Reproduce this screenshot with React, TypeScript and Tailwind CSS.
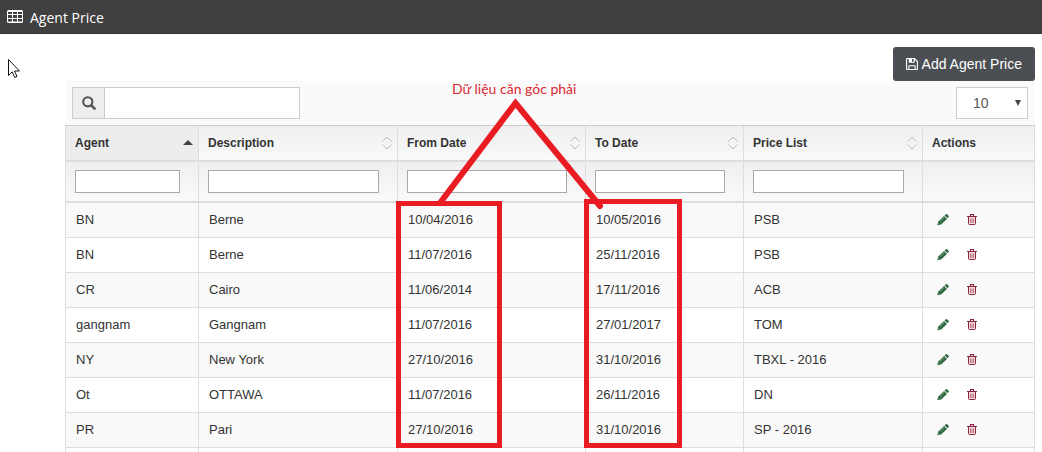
import React from "react";

type Agent = {
  agent: string;
  description: string;
  from: string;
  to: string;
  priceList: string;
};

const rows: Agent[] = [
  { agent: "BN", description: "Berne", from: "10/04/2016", to: "10/05/2016", priceList: "PSB" },
  { agent: "BN", description: "Berne", from: "11/07/2016", to: "25/11/2016", priceList: "PSB" },
  { agent: "CR", description: "Cairo", from: "11/06/2014", to: "17/11/2016", priceList: "ACB" },
  { agent: "gangnam", description: "Gangnam", from: "11/07/2016", to: "27/01/2017", priceList: "TOM" },
  { agent: "NY", description: "New York", from: "27/10/2016", to: "31/10/2016", priceList: "TBXL - 2016" },
  { agent: "Ot", description: "OTTAWA", from: "11/07/2016", to: "26/11/2016", priceList: "DN" },
  { agent: "PR", description: "Pari", from: "27/10/2016", to: "31/10/2016", priceList: "SP - 2016" },
];

const columns = ["Agent", "Description", "From Date", "To Date", "Price List"];

function TableIcon() {
  return (
    <svg width="16" height="13" viewBox="0 0 16 13" aria-hidden="true">
      <path
        fill="#fff"
        fillRule="evenodd"
        d="M1.5 0h13A1.5 1.5 0 0 1 16 1.500v10A1.500 1.500 0 0 1 14.500 13h-13A1.500 1.500 0 0 1 0 11.500v-10A1.500 1.500 0 0 1 1.500 0zM1 2v2h4V2zm5 0v2h4V2zm5 0v2h4V2zM1 5v3h4V5zm5 0v3h4V5zm5 0v3h4V5zM1 9v2.500h4V9zm5 0v2.500h4V9zm5 0v2.500h4V9z"
      />
    </svg>
  );
}

function SaveIcon() {
  return (
    <svg width="12" height="12" viewBox="0 0 13 13" aria-hidden="true">
      <path
        fill="#fff"
        fillRule="evenodd"
        d="M1 0h8.500L13 3.500V12a1 1 0 0 1-1 1H1a1 1 0 0 1-1-1V1a1 1 0 0 1 1-1zM1.200 1.200v10.600H2.500V8.500a.7.7 0 0 1 .7-.7h6.600a.7.7 0 0 1 .7.7v3.300h1.300V4L9.500 1.600V4.500a.7.7 0 0 1-.7.7H3.700a.7.7 0 0 1-.7-.7V1.200zM6.500 1.200V4h1.700V1.200zM3.700 9v2.800h5.600V9z"
      />
    </svg>
  );
}

function SearchIcon() {
  return (
    <svg width="14" height="14" viewBox="0 0 14 14" aria-hidden="true" fill="none" stroke="#555">
      <circle cx="5.800" cy="5.800" r="4.600" strokeWidth="2.100" />
      <path d="M9.300 9.300l3.300 3.300" strokeWidth="2.500" strokeLinecap="round" />
    </svg>
  );
}

function PencilIcon() {
  return (
    <svg width="12" height="12" viewBox="0 0 12 12" aria-hidden="true">
      <path fill="#2f6b42" d="M.3 11.300l.8-3.500L7 1.900 10 4.900l-5.900 5.600zM7.500 1.400L8.900.3a.9.9 0 0 1 1.200 0l1.500 1.500a.9.9 0 0 1 0 1.200l-1.100 1.300z" />
      <path fill="none" stroke="#b5cdb7" strokeWidth=".6" d="M3 7.500L7 3.600M1.300 9.200l1.200 1.200" />
    </svg>
  );
}

function TrashIcon() {
  return (
    <svg width="10" height="12" viewBox="0 0 10 12" aria-hidden="true" fill="none" stroke="#8c2340">
      <path fill="#f3dada" d="M1.500 2.500v7q0 1 1 1h5q1 0 1-1v-7" />
      <path d="M0 2.500h10M3.500 2V.500h3V2" strokeWidth="1.200" />
      <path d="M3.500 4.500V9M5 4.500V9M6.500 4.500V9" strokeWidth=".8" stroke="#b0606e" />
    </svg>
  );
}

function SortIcon({ active }: { active: boolean }) {
  return active ? (
    <svg width="10" height="14" viewBox="0 0 10 14" aria-hidden="true">
      <path fill="#444" d="M0 9l5-5 5 5z" />
    </svg>
  ) : (
    <svg width="10" height="14" viewBox="0 0 10 14" aria-hidden="true" fill="none" stroke="#bbb">
      <path d="M.5 5.500L5 1l4.500 4.500M.5 8.500L5 13l4.500-4.500" />
    </svg>
  );
}

function Annotation() {
  return (
    <>
      <svg
        className="pointer-events-none absolute top-0 left-0"
        width="1042"
        height="452"
        viewBox="0 0 1042 452"
        fill="none"
        stroke="#e91c24"
        strokeWidth="5"
        aria-hidden="true"
      >
        <path d="M398.500 203.500h101v242h-101zM586.500 201.500h93v244h-93z" />
        <path d="M440 203L515.500 103 600 206" strokeWidth="6" strokeLinecap="round" />
      </svg>
      <p className="pointer-events-none absolute top-[79px] left-[452px] font-['Lato',sans-serif] text-sm leading-5 whitespace-nowrap text-[#d9282f]">
        Dữ liệu căn góc phải
      </p>
      <svg className="pointer-events-none absolute top-[59px] left-2" width="13" height="20" viewBox="0 0 13 20" aria-hidden="true">
        <path fill="#fff" stroke="#111" d="M.5.500v16l3.700-3.600 2.600 5.600 2.200-1-2.500-5.500h5z" />
      </svg>
    </>
  );
}

const edge = "border-l border-[#ddd] last:border-r";

export default function App() {
  return (
    <div className="relative h-screen overflow-hidden bg-white font-['Liberation_Sans',Arial,sans-serif] text-[13px] text-[#333]">
      <header className="flex h-[34px] items-center gap-[7px] border-b border-[#333] bg-[#404040] px-[7px]">
        <TableIcon />
        <h1 className="pt-[3px] font-['Open_Sans',sans-serif] text-sm text-white">Agent Price</h1>
      </header>

      <main className="pt-[13px] pr-[7px] pl-[65px]">
        <div className="flex justify-end">
          <button
            type="button"
            className="flex h-[34px] items-center gap-1 rounded-[3px] bg-[#4b4f54] px-[13px] text-sm text-white"
          >
            <SaveIcon />
            Add Agent Price
          </button>
        </div>

        <div className="flex h-11 items-center justify-between bg-[#fafafa] px-[7px]">
          <div className="flex h-8 w-[228px] border border-[#ccc] bg-white">
            <label htmlFor="search" aria-label="Search" className="flex w-8 items-center justify-center border-r border-[#ccc] bg-[#eee]">
              <SearchIcon />
            </label>
            <input id="search" type="text" className="min-w-0 flex-1 bg-white px-2 outline-none" />
          </div>
          <div className="relative">
            <select
              aria-label="Rows per page"
              defaultValue="10"
              className="h-8 w-[72px] appearance-none border border-[#ccc] bg-white pl-4 text-sm text-[#555]"
            >
              <option>10</option>
              <option>25</option>
              <option>50</option>
            </select>
            <svg className="pointer-events-none absolute top-[13px] right-[7px]" width="6" height="6" viewBox="0 0 6 6" aria-hidden="true">
              <path fill="#444" d="M0 0h6L3 6z" />
            </svg>
          </div>
        </div>

        <table className="w-full table-fixed border-separate border-spacing-0 border-t border-[#ccc] text-left">
          <colgroup>
            <col className="w-[133px]" />
            <col className="w-[199px]" />
            <col className="w-[188px]" />
            <col className="w-[158px]" />
            <col className="w-[179px]" />
            <col />
          </colgroup>
          <thead>
            <tr className="h-9 bg-linear-to-b from-[#efefef] to-[#fafafa]">
              {columns.map((name, i) => (
                <th
                  key={name}
                  scope="col"
                  aria-sort={i === 0 ? "ascending" : undefined}
                  className={`${edge} border-b-2 py-0 pr-[5px] pl-[9px] font-bold ${i === 0 ? "bg-[#ededed]" : ""}`}
                >
                  <div className="flex items-center justify-between text-xs">
                    {name}
                    <SortIcon active={i === 0} />
                  </div>
                </th>
              ))}
              <th scope="col" className={`${edge} border-b-2 py-0 pl-[9px] text-xs font-bold`}>
                Actions
              </th>
            </tr>
            <tr className="h-[41px] bg-linear-to-b from-[#efefef] to-[#fafafa]">
              {columns.map((name) => (
                <td key={name} className={`${edge} border-b-2 py-0 pr-[18px] pl-[9px]`}>
                  <input
                    type="text"
                    aria-label={`Filter ${name}`}
                    className="block h-[23px] w-full border border-[#a9a9a9] bg-white px-1 outline-none"
                  />
                </td>
              ))}
              <td className={`${edge} border-b-2`} />
            </tr>
          </thead>
          <tbody>
            {rows.map((row, i) => (
              <tr key={i} className="h-[35px] odd:bg-[#f9f9f9]">
                {[row.agent, row.description, row.from, row.to, row.priceList].map((value, c) => (
                  <td key={c} className={`${edge} border-b py-0 pl-[10px]`}>
                    {value}
                  </td>
                ))}
                <td className={`${edge} border-b py-0 pl-[14px]`}>
                  <div className="flex items-center gap-[18px]">
                    <button type="button" aria-label={`Edit ${row.agent}`}>
                      <PencilIcon />
                    </button>
                    <button type="button" aria-label={`Delete ${row.agent}`}>
                      <TrashIcon />
                    </button>
                  </div>
                </td>
              </tr>
            ))}
            <tr className="h-[35px] bg-white" aria-hidden="true">
              {columns.map((name) => (
                <td key={name} className={edge} />
              ))}
              <td className={edge} />
            </tr>
          </tbody>
        </table>
      </main>

      <Annotation />
    </div>
  );
}
